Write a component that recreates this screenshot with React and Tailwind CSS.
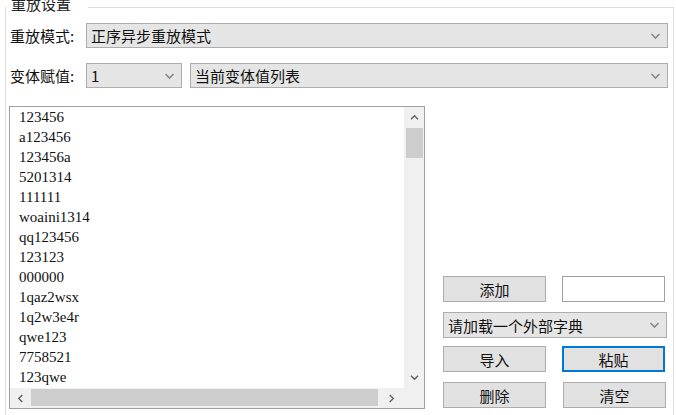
const ui = { fontFamily: '"Noto Sans CJK SC", "Noto Sans", sans-serif' }

const words = [
  "123456",
  "a123456",
  "123456a",
  "5201314",
  "111111",
  "woaini1314",
  "qq123456",
  "123123",
  "000000",
  "1qaz2wsx",
  "1q2w3e4r",
  "qwe123",
  "7758521",
  "123qwe",
]

const Chevron = ({ dir = "down", className = "" }) => {
  const d = {
    down: "M1 2 L5 6 L9 2",
    up: "M1 6 L5 2 L9 6",
    left: "M6 1 L2 5 L6 9",
    right: "M2 1 L6 5 L2 9",
  }[dir]
  const box = dir === "left" || dir === "right" ? "0 0 8 10" : "0 0 10 8"
  return (
    <svg viewBox={box} className={className} fill="none" stroke="currentColor" strokeWidth="1.6">
      <path d={d} />
    </svg>
  )
}

const Combo = ({ text, className = "" }) => (
  <div
    className={`flex items-center justify-between h-[25px] bg-[#e5e5e5] border border-[#adadad] pl-[4px] pr-[6px] text-[15px] leading-none text-[#111] ${className}`}
  >
    <span>{text}</span>
    <Chevron className="w-[11px] h-[8px] text-[#888]" />
  </div>
)

const Btn = ({ children, active }) => (
  <div
    className={`flex items-center justify-center w-[103px] h-[26px] bg-[#e1e1e1] text-[15px] leading-none text-[#111] ${
      active ? "border-2 border-[#0078d7]" : "border border-[#adadad]"
    }`}
  >
    {children}
  </div>
)

export default function App() {
  return (
    <div className="w-[676px] h-[415px] bg-white overflow-hidden" style={ui}>
      <div className="ml-[5px] mt-[7px] w-[669px] h-[430px] border-l border-t border-r border-[#dcdcdc]">
        {/* group title */}
        <div className="-mt-[12px] w-[82px] h-[15px] bg-white pl-[5px] text-[15px] leading-[15px] text-[#222]">
          重放设置
        </div>

        <div className="mt-[12px] pl-[4px] flex items-center h-[25px]">
          <span className="w-[76px] text-[15px] leading-none text-[#111]">重放模式:</span>
          <Combo text="正序异步重放模式" className="w-[582px]" />
        </div>

        <div className="mt-[15px] pl-[4px] flex items-center h-[25px]">
          <span className="w-[76px] text-[15px] leading-none text-[#111]">变体赋值:</span>
          <Combo text="1" className="w-[96px]" />
          <Combo text="当前变体值列表" className="w-[478px] ml-[8px]" />
        </div>

        <div className="mt-[18px] pl-[3px] flex">
          {/* list box */}
          <div className="w-[416px] h-[303px] border border-[#a0a0a0] flex flex-col">
            <div className="flex h-[281px]">
              <div
                className="w-[394px] pl-[9px] text-[15px] text-[#111]"
                style={{ fontFamily: '"Liberation Serif", serif' }}
              >
                {words.map((w) => (
                  <div key={w} className="h-[20px] leading-[20px]">
                    {w}
                  </div>
                ))}
              </div>
              <div className="w-[20px] bg-[#f0f0f0] flex flex-col items-center">
                <div className="h-[21px] flex items-center justify-center">
                  <Chevron dir="up" className="w-[9px] h-[7px] text-[#606060]" />
                </div>
                <div className="w-[17px] h-[30px] bg-[#cdcdcd]" />
                <div className="flex-1" />
                <div className="h-[21px] flex items-center justify-center">
                  <Chevron dir="down" className="w-[9px] h-[7px] text-[#606060]" />
                </div>
              </div>
            </div>
            <div className="flex h-[20px] bg-[#f0f0f0]">
              <div className="w-[21px] flex items-center justify-center">
                <Chevron dir="left" className="w-[7px] h-[9px] text-[#606060]" />
              </div>
              <div className="w-[347px] h-[17px] mt-[1px] bg-[#cdcdcd]" />
              <div className="flex-1 flex items-center justify-center">
                <Chevron dir="right" className="w-[7px] h-[9px] text-[#606060]" />
              </div>
              <div className="w-[20px]" />
            </div>
          </div>

          {/* right controls */}
          <div className="ml-[18px] mt-[170px] w-[224px] flex flex-col">
            <div className="flex items-center gap-[16px]">
              <Btn>添加</Btn>
              <div className="w-[103px] h-[26px] bg-white border border-[#a0a0a0] -mt-[1px]" />
            </div>
            <Combo text="请加载一个外部字典" className="mt-[10px] w-[224px] h-[26px]" />
            <div className="mt-[8px] flex items-center gap-[16px]">
              <Btn>导入</Btn>
              <Btn active>粘贴</Btn>
            </div>
            <div className="mt-[10px] flex items-center gap-[17px]">
              <Btn>删除</Btn>
              <Btn>清空</Btn>
            </div>
          </div>
        </div>
      </div>
    </div>
  )
}
